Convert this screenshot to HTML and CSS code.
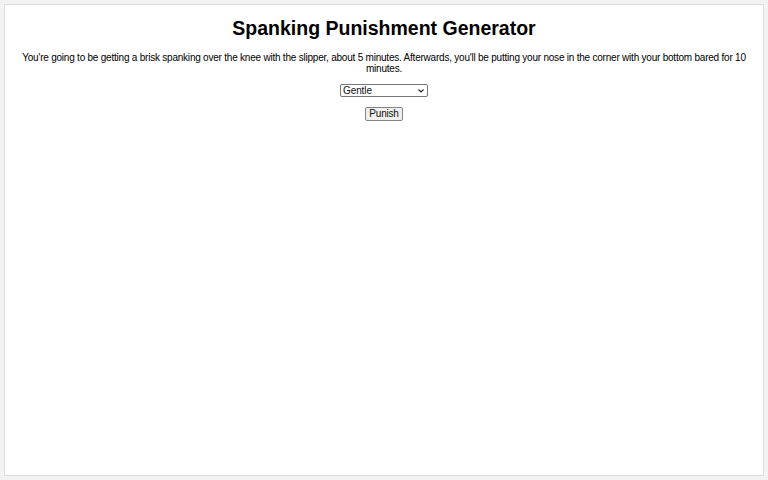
FILE: index.html
```html
<!DOCTYPE html>
<html>
<head>
<meta charset="utf-8">
<link rel="stylesheet" href="styles.css">
</head>
<body>
<div class="container">
  <h1 class="title">Spanking Punishment Generator</h1>
  <p class="result">You're going to be getting a brisk spanking over the knee with the slipper, about 5 minutes. Afterwards, you'll be putting your nose in the corner with your bottom bared for 10 minutes.</p>
  <div class="controls first">
    <div class="select-wrap">
      <select class="level">
        <option>Gentle</option>
        <option>Moderate</option>
        <option>Severe</option>
      </select>
      <svg class="chevron" width="6" height="4" viewBox="0 0 6 4"><path d="M0.5 0.5 L3 3 L5.5 0.5" fill="none" stroke="#222" stroke-width="1.1"/></svg>
    </div>
  </div>
  <div class="controls">
    <button class="punish">Punish</button>
  </div>
</div>
</body>
</html>
```
FILE: styles.css
```css
html, body {
  margin: 0;
  padding: 0;
  height: 100%;
}
body {
  background: #f2f2f2;
  font-family: "Liberation Sans", Arial, sans-serif;
  padding: 4px;
  box-sizing: border-box;
}
.container {
  background: #fff;
  border: 1px solid #dcdcdc;
  height: 100%;
  box-sizing: border-box;
  padding: 0 16px;
  text-align: center;
}
.title {
  font-size: 19.5px;
  margin: 12px 0 0;
  line-height: 22px;
  font-weight: bold;
}
.result {
  font-size: 10px;
  line-height: 11px;
  letter-spacing: -0.22px;
  margin: 13px 0 0;
}
.controls {
  display: flex;
  justify-content: center;
  margin-top: 10px;
}
.controls.first {
  margin-top: 10px;
}
.select-wrap {
  position: relative;
  width: 88px;
  height: 13px;
}
.level {
  -webkit-appearance: none;
  appearance: none;
  display: block;
  font-family: "Liberation Sans", Arial, sans-serif;
  font-size: 10px;
  letter-spacing: -0.1px;
  width: 88px;
  height: 13px;
  line-height: 11px;
  padding: 0 0 0 2px;
  margin: 0;
  border: 1px solid #767676;
  border-radius: 2px;
  background: #fff;
  color: #111;
}
.chevron {
  position: absolute;
  right: 4px;
  top: 5px;
  pointer-events: none;
}
.punish {
  font-family: "Liberation Sans", Arial, sans-serif;
  font-size: 10px;
  letter-spacing: -0.2px;
  padding: 0 3px;
  margin: 0;
  height: 14px;
  line-height: 12px;
  border: 1px solid #858585;
  border-radius: 2px;
  background: #efefef;
  color: #111;
}
```
